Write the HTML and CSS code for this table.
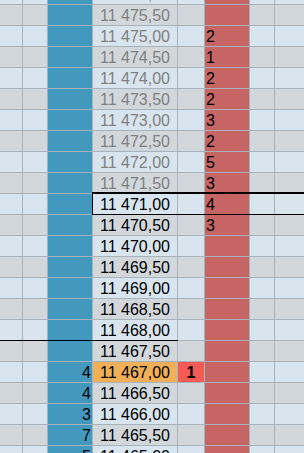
FILE: index.html
```html
<!DOCTYPE html>
<html lang="ru">
<head>
<meta charset="utf-8">
<title>Стакан</title>
<link rel="stylesheet" href="styles.css">
</head>
<body>
<div class="ladder">
  <div class="row light"><span></span><span></span><span class="bid"></span><span class="price past">11 476,00</span><span></span><span class="ask"></span><span></span><span></span></div>
  <div class="row grey"><span></span><span></span><span class="bid"></span><span class="price past">11 475,50</span><span></span><span class="ask"></span><span></span><span></span></div>
  <div class="row light"><span></span><span></span><span class="bid"></span><span class="price past">11 475,00</span><span></span><span class="ask">2</span><span></span><span></span></div>
  <div class="row grey"><span></span><span></span><span class="bid"></span><span class="price past">11 474,50</span><span></span><span class="ask">1</span><span></span><span></span></div>
  <div class="row light"><span></span><span></span><span class="bid"></span><span class="price past">11 474,00</span><span></span><span class="ask">2</span><span></span><span></span></div>
  <div class="row grey"><span></span><span></span><span class="bid"></span><span class="price past">11 473,50</span><span></span><span class="ask">2</span><span></span><span></span></div>
  <div class="row light"><span></span><span></span><span class="bid"></span><span class="price past">11 473,00</span><span></span><span class="ask">3</span><span></span><span></span></div>
  <div class="row grey"><span></span><span></span><span class="bid"></span><span class="price past">11 472,50</span><span></span><span class="ask">2</span><span></span><span></span></div>
  <div class="row light"><span></span><span></span><span class="bid"></span><span class="price past">11 472,00</span><span></span><span class="ask">5</span><span></span><span></span></div>
  <div class="row grey"><span></span><span></span><span class="bid"></span><span class="price past">11 471,50</span><span></span><span class="ask">3</span><span></span><span></span></div>
  <div class="row light best-ask"><span></span><span></span><span class="bid"></span><span class="price">11 471,00</span><span></span><span class="ask">4</span><span></span><span></span></div>
  <div class="row grey"><span></span><span></span><span class="bid"></span><span class="price">11 470,50</span><span></span><span class="ask">3</span><span></span><span></span></div>
  <div class="row light"><span></span><span></span><span class="bid"></span><span class="price">11 470,00</span><span></span><span class="ask"></span><span></span><span></span></div>
  <div class="row grey"><span></span><span></span><span class="bid"></span><span class="price">11 469,50</span><span></span><span class="ask"></span><span></span><span></span></div>
  <div class="row light"><span></span><span></span><span class="bid"></span><span class="price">11 469,00</span><span></span><span class="ask"></span><span></span><span></span></div>
  <div class="row grey"><span></span><span></span><span class="bid"></span><span class="price">11 468,50</span><span></span><span class="ask"></span><span></span><span></span></div>
  <div class="row light"><span></span><span></span><span class="bid"></span><span class="price">11 468,00</span><span></span><span class="ask"></span><span></span><span></span></div>
  <div class="row grey best-bid"><span></span><span></span><span class="bid"></span><span class="price">11 467,50</span><span></span><span class="ask"></span><span></span><span></span></div>
  <div class="row light"><span></span><span></span><span class="bid">4</span><span class="price last">11 467,00</span><span class="trade">1</span><span class="ask"></span><span></span><span></span></div>
  <div class="row grey"><span></span><span></span><span class="bid">4</span><span class="price">11 466,50</span><span></span><span class="ask"></span><span></span><span></span></div>
  <div class="row light"><span></span><span></span><span class="bid">3</span><span class="price">11 466,00</span><span></span><span class="ask"></span><span></span><span></span></div>
  <div class="row grey"><span></span><span></span><span class="bid">7</span><span class="price">11 465,50</span><span></span><span class="ask"></span><span></span><span></span></div>
  <div class="row light"><span></span><span></span><span class="bid">5</span><span class="price">11 465,00</span><span></span><span class="ask"></span><span></span><span></span></div>
</div>
</body>
</html>
```

FILE: styles.css
```css
html, body {
  margin: 0;
  padding: 0;
  width: 304px;
  height: 453px;
  overflow: hidden;
  background: #a7b2ba;
}

/* price ladder: rows separated by 1px grid lines */
.ladder {
  display: flex;
  flex-direction: column;
  gap: 1px;
  width: 304px;
  margin-top: -16px;
  background: #a7b2ba;
  font-family: "Liberation Sans", Arial, sans-serif;
  font-size: 16px;
  color: #000;
}

.row {
  position: relative;
  display: grid;
  grid-template-columns: 22px 24px 44px 84px 26px 44px 24px 29px;
  column-gap: 1px;
  height: 20px;
  line-height: 21px;
}

.row > span {
  display: block;
  overflow: hidden;
  white-space: nowrap;
}

.row.light > span { background: #d9e5ee; }
.row.grey > span { background: #d2d7dc; }

/* bid volume column */
.row > span.bid {
  background: #4398be;
  text-align: right;
  padding-right: 1px;
}

/* ask volume column */
.row > span.ask {
  background: #c76565;
  padding-left: 1px;
}

.row > span.price {
  text-align: center;
}

.row > span.past {
  color: #808080;
}

.row > span.last {
  background: #f1b057;
}

.row > span.trade {
  background: #f45a56;
  font-weight: bold;
  text-align: center;
}

/* frame around the best offer row */
.best-ask::after {
  content: "";
  position: absolute;
  top: -2px;
  left: 92px;
  right: -1px;
  bottom: -1px;
  border-top: 2px solid #000;
  border-left: 1px solid #000;
  border-bottom: 1px solid #000;
  pointer-events: none;
}

/* marker above the best bid row */
.best-bid::after {
  content: "";
  position: absolute;
  top: -1px;
  left: 0;
  width: 178px;
  height: 1px;
  background: #000;
}
```
